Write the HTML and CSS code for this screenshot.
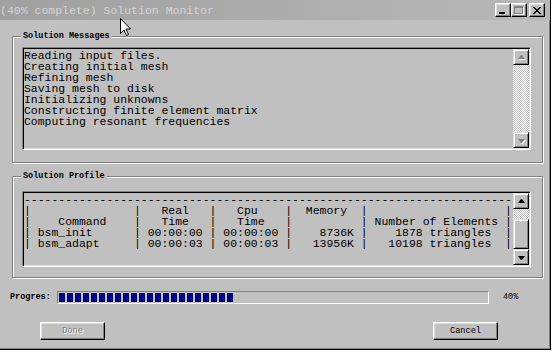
FILE: index.html
```html
<!DOCTYPE html>
<html lang="en">
<head>
  <meta charset="UTF-8">
  <title>Solution Monitor</title>
  <link rel="stylesheet" href="styles.css">
</head>
<body>
  <div class="window">
    <div class="titlebar">
      <span class="title">(40% complete) Solution Monitor</span>
      <div class="title-btn"><span class="glyph-min"></span></div>
      <div class="title-btn"><span class="glyph-max"></span></div>
      <div class="title-btn close">
        <svg width="8" height="7" viewBox="0 0 8 7"><path d="M0 0h2v1h1v1h2V1h1V0h2v1h-1v1h-1v1h-1v1h1v1h1v1h1v1h-2v-1h-1v-1h-2v1h-1v1H0v-1h1v-1h1v-1h1V3H2V2H1V1H0z" fill="#000"/></svg>
      </div>
    </div>

    <div class="group group-messages">
      <span class="group-label">Solution Messages</span>
      <div class="textbox msgbox">
        <pre class="textbox-text">Reading input files.
Creating initial mesh
Refining mesh
Saving mesh to disk
Initializing unknowns
Constructing finite element matrix
Computing resonant frequencies</pre>
        <div class="scrollbar">
          <div class="sb-btn"><span class="arrow-up disabled"></span></div>
          <div class="sb-track"></div>
          <div class="sb-btn"><span class="arrow-down disabled"></span></div>
        </div>
      </div>
    </div>

    <div class="group group-profile">
      <span class="group-label">Solution Profile</span>
      <div class="textbox profilebox">
        <pre class="textbox-text">-----------------------------------------------------------------------
|               |   Real   |   Cpu    |  Memory  |                    |
|    Command    |   Time   |   Time   |          | Number of Elements |
| bsm_init      | 00:00:00 | 00:00:00 |    8736K |    1878 triangles  |
| bsm_adapt     | 00:00:03 | 00:00:03 |   13956K |   10198 triangles  |</pre>
        <div class="scrollbar">
          <div class="sb-btn"><span class="arrow-up"></span></div>
          <div class="sb-track short"></div>
          <div class="sb-btn sb-thumb"></div>
          <div class="sb-btn"><span class="arrow-down"></span></div>
        </div>
      </div>
    </div>

    <div class="progress-row">
      <span class="small-label progress-label">Progres:</span>
      <div class="progress-bar">
        <div class="progress-fill"></div>
      </div>
      <span class="small-label percent">40%</span>
    </div>

    <div class="button-row">
      <button class="btn" disabled>Done</button>
      <button class="btn btn-cancel">Cancel</button>
    </div>

    <svg class="cursor" width="12" height="19" viewBox="0 0 12 19">
      <path d="M0.5 0.5V15.5L4 12L6.5 17.5L8.5 16.5L6 11H10.5Z" fill="#fff" stroke="#000" stroke-width="1"/>
    </svg>
  </div>
</body>
</html>
```

FILE: styles.css
```css
body {
  margin: 0;
  padding: 0;
  background-color: #ffffff;
  font-family: "Liberation Mono", monospace;
}

.window {
  position: relative;
  width: 551px;
  height: 350px;
  box-sizing: border-box;
  background-color: #c0c0c0;
  border-right: 1px solid #000;
  border-bottom: 1px solid #000;
  box-shadow: inset -1px -1px #808080;
}

/* Title bar (inactive) */
.titlebar {
  display: flex;
  align-items: center;
  height: 20px;
  padding-right: 5px;
  background: linear-gradient(to right, #a0a0a0, #acacac 50%, #b8b8b8);
}

.title {
  flex: 1;
  padding-top: 2px;
  font-size: 11.5px;
  line-height: 18px;
  color: #d4d4d4;
  white-space: pre;
}

.title-btn {
  width: 16px;
  height: 14px;
  box-sizing: border-box;
  display: flex;
  align-items: center;
  justify-content: center;
  background-color: #c0c0c0;
  border: 1px solid;
  border-color: #fff #000 #000 #fff;
  box-shadow: inset -1px -1px #808080, inset 1px 1px #dfdfdf;
}

.title-btn.close {
  margin-left: 2px;
}

.glyph-min {
  width: 6px;
  height: 2px;
  margin: 6px 2px 0 0;
  background-color: #000;
}

.glyph-max {
  width: 9px;
  height: 8px;
  box-sizing: border-box;
  border: 1px solid #808080;
  border-top-width: 2px;
  box-shadow: 1px 1px #fff;
  margin-right: 1px;
}

/* Group boxes */
.group {
  width: 531px;
  margin-left: 12px;
  box-sizing: border-box;
  padding-left: 9px;
  border: 1px solid #808080;
  box-shadow: inset 1px 1px #fff, 1px 1px #fff;
}

.group-messages {
  height: 127px;
  margin-top: 16px;
}

.group-profile {
  height: 102px;
  margin-top: 13px;
}

.group-label {
  display: block;
  width: max-content;
  margin: -6px 0 0 -1px;
  padding: 0 2px;
  background-color: #c0c0c0;
  font-size: 8.5px;
  font-weight: bold;
  line-height: 11px;
  color: #000;
}

/* Sunken read-only text boxes */
.textbox {
  display: flex;
  width: 509px;
  box-sizing: border-box;
  border: 1px solid;
  border-color: #808080 #fff #fff #808080;
  box-shadow: inset 1px 1px #000, inset -1px -1px #dfdfdf;
  padding: 1px;
}

.msgbox {
  height: 103px;
  margin-top: 5px;
}

.profilebox {
  height: 76px;
  margin-top: 9px;
}

.textbox-text {
  flex: 1;
  margin: 0;
  padding: 1px 0 0 0;
  overflow: hidden;
  font-family: "Liberation Mono", monospace;
  font-size: 11.46px;
  line-height: 11px;
  color: #000;
}

/* Scrollbars */
.scrollbar {
  display: flex;
  flex-direction: column;
  width: 16px;
}

.sb-btn {
  height: 16px;
  flex: none;
  box-sizing: border-box;
  display: flex;
  align-items: center;
  justify-content: center;
  background-color: #c0c0c0;
  border: 1px solid;
  border-color: #dfdfdf #000 #000 #dfdfdf;
  box-shadow: inset 1px 1px #fff, inset -1px -1px #808080;
}

.sb-thumb {
  height: 30px;
}

.sb-track {
  flex: 1;
  background: repeating-conic-gradient(#fff 0 25%, #c0c0c0 0 50%) 0 0 / 2px 2px;
}

.sb-track.short {
  flex: none;
  height: 10px;
}

.arrow-up, .arrow-down {
  width: 1px;
  height: 0;
  border-left: 3px solid transparent;
  border-right: 3px solid transparent;
}

.arrow-up {
  border-bottom: 4px solid #000;
  margin-bottom: 1px;
}

.arrow-down {
  border-top: 4px solid #000;
  margin-top: 1px;
}

.arrow-up.disabled {
  border-bottom-color: #808080;
  filter: drop-shadow(1px 1px 0 #fff);
}

.arrow-down.disabled {
  border-top-color: #808080;
  filter: drop-shadow(1px 1px 0 #fff);
}

/* Progress */
.small-label {
  font-size: 8.5px;
  line-height: 13px;
  color: #000;
}

.progress-row {
  display: flex;
  align-items: center;
  height: 13px;
  margin-top: 13px;
  padding-left: 10px;
}

.progress-label {
  width: 47px;
  font-weight: bold;
}

.progress-bar {
  width: 432px;
  height: 13px;
  box-sizing: border-box;
  padding: 1px;
  border: 1px solid;
  border-color: #808080 #fff #fff #808080;
}

.progress-fill {
  width: 176px;
  height: 9px;
  background: repeating-linear-gradient(to right, #000080 0 6px, transparent 6px 8px);
}

.percent {
  margin-left: 14px;
}

/* Buttons */
.button-row {
  display: flex;
  margin-top: 18px;
}

.btn {
  width: 65px;
  height: 18px;
  margin-left: 40px;
  padding: 0;
  box-sizing: border-box;
  background-color: #c0c0c0;
  border: 1px solid;
  border-color: #fff #000 #000 #fff;
  box-shadow: inset -1px -1px #808080, inset 1px 1px #dfdfdf;
  font-family: "Liberation Mono", monospace;
  font-size: 8.6px;
  color: #000;
}

.btn:disabled {
  color: #808080;
  text-shadow: 1px 1px 0 #fff;
}

.btn-cancel {
  margin-left: auto;
  margin-right: 52px;
}

.cursor {
  position: absolute;
  left: 120px;
  top: 18px;
}
```
